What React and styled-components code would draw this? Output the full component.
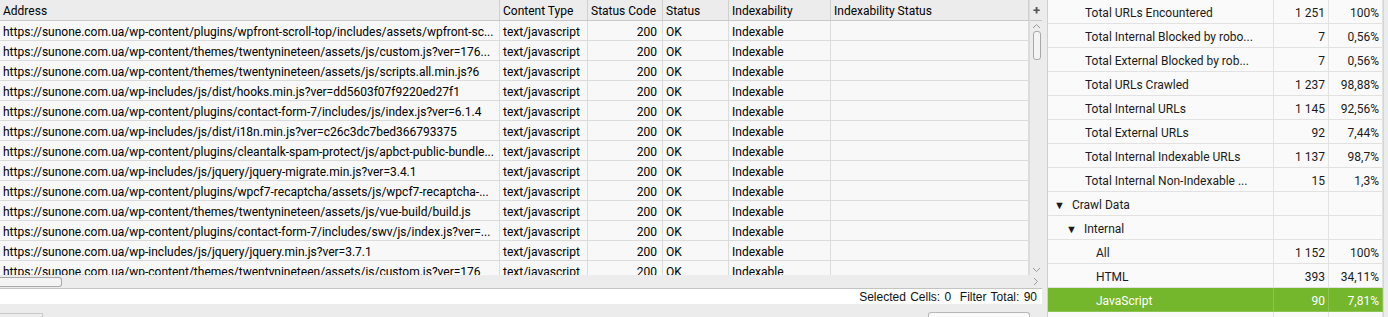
import React from 'react'
import styled, { createGlobalStyle } from 'styled-components'

const GlobalStyle = createGlobalStyle`
    html, body {
        margin: 0;
        padding: 0;
        background: #ececec;
    }
    body {
        font-family: Roboto, "Liberation Sans", sans-serif;
        font-size: 12px;
        color: #111;
    }
`

const Page = styled.div`
    display: flex;
    width: 1388px;
    height: 317px;
    overflow: hidden;
    background: #ececec;
`

const LeftPanel = styled.div`
    width: 1042px;
    display: flex;
    flex-direction: column;
`

const TableArea = styled.div`
    display: flex;
    height: 275px;
    overflow: hidden;
    background: #f8f8f8;
`

const Grid = styled.div`
    width: 1029px;
    display: flex;
    flex-direction: column;
`

const HeaderRow = styled.div`
    display: flex;
    height: 20px;
    background: #ececec;
    border-bottom: 1px solid #c9c9c9;
    flex-shrink: 0;
`

const HeadCell = styled.div`
    width: ${p => p.w}px;
    flex-shrink: 0;
    box-sizing: border-box;
    padding: 2px 3px 0;
    line-height: 18px;
    border-right: 1px solid #d0d0d0;
    white-space: nowrap;
    overflow: hidden;
    color: #000;
`

const Row = styled.div`
    display: flex;
    height: 19px;
    border-bottom: 1px solid #dcdcdc;
    flex-shrink: 0;
`

const Cell = styled.div`
    width: ${p => p.w}px;
    flex-shrink: 0;
    box-sizing: border-box;
    padding: ${p => (p.right ? '2px 5px 0 3px' : '2px 3px 0')};
    text-align: ${p => (p.right ? 'right' : 'left')};
    line-height: 18px;
    border-right: 1px solid #dcdcdc;
    white-space: nowrap;
    overflow: hidden;
    color: #000;
`

const VScroll = styled.div`
    width: 13px;
    display: flex;
    flex-direction: column;
    align-items: center;
    background: #ececec;
    border-left: 1px solid #dcdcdc;
`

const PlusCell = styled.div`
    width: 13px;
    height: 20px;
    border-bottom: 1px solid #c9c9c9;
    display: flex;
    align-items: center;
    justify-content: center;
    color: #555;
    font-weight: bold;
    font-size: 13px;
`

const Arrow = styled.div`
    height: 10px;
    display: flex;
    align-items: center;
    justify-content: center;
`

const VThumb = styled.div`
    width: 8px;
    height: 29px;
    box-sizing: border-box;
    border: 1px solid #a8a8a8;
    border-radius: 3px;
    background: #f4f4f4;
`

const Track = styled.div`
    flex: 1;
`

const HScroll = styled.div`
    height: 13px;
    display: flex;
    align-items: center;
    background: #ececec;
    border-bottom: 1px solid #c4c4c4;
`

const HThumb = styled.div`
    width: 62px;
    height: 10px;
    box-sizing: border-box;
    border: 1px solid #a8a8a8;
    border-left: none;
    border-radius: 0 3px 3px 0;
    background: #f4f4f4;
`

const HRight = styled.div`
    margin-left: auto;
    width: 13px;
    display: flex;
    justify-content: center;
`

const StatusBar = styled.div`
    height: 15px;
    background: #fff;
    display: flex;
    justify-content: flex-end;
    align-items: center;
    padding-right: 5px;
    font-family: "Liberation Sans", Arial, sans-serif;
    font-size: 12px;
    color: #111;
    white-space: pre;
    word-spacing: 1px;
`

const BottomBar = styled.div`
    flex: 1;
    display: flex;
    align-items: flex-end;
    background: #ececec;
`

const Tab = styled.div`
    width: 42px;
    height: 3px;
    border-top: 1px solid #c8c8c8;
    border-right: 1px solid #c8c8c8;
`

const SearchBox = styled.div`
    margin-left: auto;
    margin-right: 12px;
    width: 100px;
    height: 4px;
    border: 1px solid #b8b8b8;
    border-bottom: none;
    border-radius: 3px 3px 0 0;
    background: #fafafa;
`

const Splitter = styled.div`
    width: 5px;
    background: #ececec;
    border-right: 1px solid #cfcfcf;
`

const RightPanel = styled.div`
    flex: 1;
    display: flex;
    background: #fafafa;
`

const Tree = styled.div`
    width: 335px;
    display: flex;
    flex-direction: column;
`

const TreeRow = styled.div`
    display: flex;
    height: 23px;
    flex-shrink: 0;
    border-bottom: 1px solid ${p => (p.selected ? '#8cc452' : '#e2e2e2')};
    background: ${p => (p.selected ? '#74b62c' : 'transparent')};
    color: ${p => (p.selected ? '#fff' : '#1a1a1a')};
`

const Label = styled.div`
    width: 226px;
    box-sizing: border-box;
    padding: 3px 0 0 ${p => p.indent}px;
    display: flex;
    align-items: center;
    gap: 7px;
    white-space: nowrap;
    border-right: 1px solid ${p => (p.selected ? '#8cc452' : '#e2e2e2')};
`

const Num = styled.div`
    width: ${p => p.w}px;
    box-sizing: border-box;
    padding: 3px 3px 0 0;
    display: flex;
    align-items: center;
    justify-content: flex-end;
    border-right: 1px solid ${p => (p.selected ? '#8cc452' : '#e2e2e2')};
`

const Caret = styled.span`
    font-size: 11px;
    line-height: 1;
    color: #1a1a1a;
`

const RScroll = styled.div`
    flex: 1;
    background: #ececec;
    border-left: 1px solid #d6d6d6;
`

const cols = [
    { name: 'Address', w: 500 },
    { name: 'Content Type', w: 88 },
    { name: 'Status Code', w: 75 },
    { name: 'Status', w: 66 },
    { name: 'Indexability', w: 102 },
    { name: 'Indexability Status', w: 198 },
]

const urls = [
    'https://sunone.com.ua/wp-content/plugins/wpfront-scroll-top/includes/assets/wpfront-sc...',
    'https://sunone.com.ua/wp-content/themes/twentynineteen/assets/js/custom.js?ver=176...',
    'https://sunone.com.ua/wp-content/themes/twentynineteen/assets/js/scripts.all.min.js?6',
    'https://sunone.com.ua/wp-includes/js/dist/hooks.min.js?ver=dd5603f07f9220ed27f1',
    'https://sunone.com.ua/wp-content/plugins/contact-form-7/includes/js/index.js?ver=6.1.4',
    'https://sunone.com.ua/wp-includes/js/dist/i18n.min.js?ver=c26c3dc7bed366793375',
    'https://sunone.com.ua/wp-content/plugins/cleantalk-spam-protect/js/apbct-public-bundle...',
    'https://sunone.com.ua/wp-includes/js/jquery/jquery-migrate.min.js?ver=3.4.1',
    'https://sunone.com.ua/wp-content/plugins/wpcf7-recaptcha/assets/js/wpcf7-recaptcha-...',
    'https://sunone.com.ua/wp-content/themes/twentynineteen/assets/js/vue-build/build.js',
    'https://sunone.com.ua/wp-content/plugins/contact-form-7/includes/swv/js/index.js?ver=...',
    'https://sunone.com.ua/wp-includes/js/jquery/jquery.min.js?ver=3.7.1',
    'https://sunone.com.ua/wp-content/themes/twentynineteen/assets/js/custom.js?ver=176',
]

const overview = [
    { label: 'Total URLs Encountered', count: '1 251', pct: '100%', indent: 37 },
    { label: 'Total Internal Blocked by robo...', count: '7', pct: '0,56%', indent: 37 },
    { label: 'Total External Blocked by rob...', count: '7', pct: '0,56%', indent: 37 },
    { label: 'Total URLs Crawled', count: '1 237', pct: '98,88%', indent: 37 },
    { label: 'Total Internal URLs', count: '1 145', pct: '92,56%', indent: 37 },
    { label: 'Total External URLs', count: '92', pct: '7,44%', indent: 37 },
    { label: 'Total Internal Indexable URLs', count: '1 137', pct: '98,7%', indent: 37 },
    { label: 'Total Internal Non-Indexable ...', count: '15', pct: '1,3%', indent: 37 },
    { label: 'Crawl Data', caret: true, indent: 6 },
    { label: 'Internal', caret: true, indent: 18 },
    { label: 'All', count: '1 152', pct: '100%', indent: 48 },
    { label: 'HTML', count: '393', pct: '34,11%', indent: 48 },
    { label: 'JavaScript', count: '90', pct: '7,81%', indent: 48, selected: true },
    { label: '', indent: 48 },
]

const Chevron = ({ d }) => (
    <svg width="9" height="6" viewBox="0 0 9 6">
        <path d={d} fill="none" stroke="#9a9a9a" strokeWidth="1" />
    </svg>
)

export default function App() {
    return (
        <Page>
            <GlobalStyle />
            <LeftPanel>
                <TableArea>
                    <Grid>
                        <HeaderRow>
                            {cols.map(c => (
                                <HeadCell key={c.name} w={c.w}>{c.name}</HeadCell>
                            ))}
                        </HeaderRow>
                        {urls.map((u, i) => (
                            <Row key={i}>
                                <Cell w={500}>{u}</Cell>
                                <Cell w={88}>text/javascript</Cell>
                                <Cell w={75} right>200</Cell>
                                <Cell w={66}>OK</Cell>
                                <Cell w={102}>Indexable</Cell>
                                <Cell w={198}></Cell>
                            </Row>
                        ))}
                    </Grid>
                    <VScroll>
                        <PlusCell>+</PlusCell>
                        <Arrow><Chevron d="M1 5 L4.5 1.5 L8 5" /></Arrow>
                        <VThumb />
                        <Track />
                        <Arrow><Chevron d="M1 1 L4.5 4.5 L8 1" /></Arrow>
                    </VScroll>
                </TableArea>
                <HScroll>
                    <HThumb />
                    <HRight>
                        <svg width="6" height="9" viewBox="0 0 6 9">
                            <path d="M1 1 L4.5 4.5 L1 8" fill="none" stroke="#9a9a9a" strokeWidth="1" />
                        </svg>
                    </HRight>
                </HScroll>
                <StatusBar>{'Selected Cells: 0  Filter Total: 90'}</StatusBar>
                <BottomBar>
                    <Tab />
                    <SearchBox />
                </BottomBar>
            </LeftPanel>
            <Splitter />
            <RightPanel>
                <Tree>
                    {overview.map((r, i) => (
                        <TreeRow key={i} selected={r.selected}>
                            <Label indent={r.indent} selected={r.selected}>
                                {r.caret && <Caret>▼</Caret>}
                                {r.label}
                            </Label>
                            <Num w={55} selected={r.selected}>{r.count}</Num>
                            <Num w={54} selected={r.selected}>{r.pct}</Num>
                        </TreeRow>
                    ))}
                </Tree>
                <RScroll />
            </RightPanel>
        </Page>
    )
}
